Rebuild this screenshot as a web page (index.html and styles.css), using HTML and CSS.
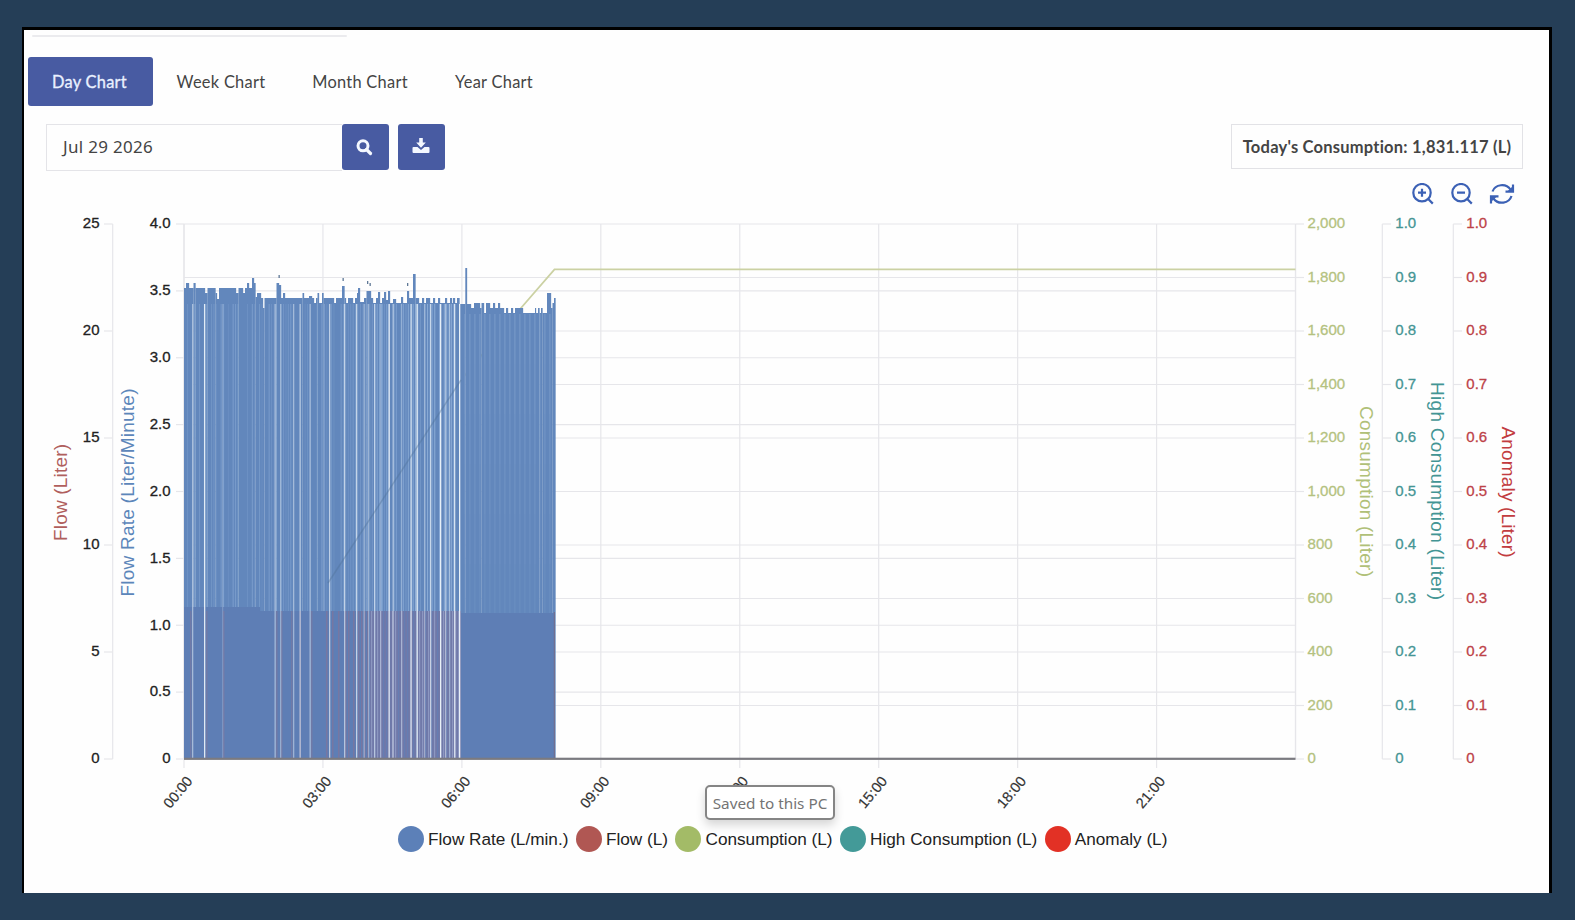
FILE: index.html
```
<!DOCTYPE html>
<html lang="en">
<head>
    <meta charset="UTF-8">
    <title>Water Consumption</title>
    <link rel="stylesheet" href="styles.css">
</head>
<body>
    <div class="container">
        <div class="divider"></div>

        <!-- Tabs -->
        <nav class="tabs">
            <a class="tab active">Day Chart</a>
            <a class="tab week">Week Chart</a>
            <a class="tab month">Month Chart</a>
            <a class="tab year">Year Chart</a>
        </nav>

        <!-- Date search and daily total -->
        <div class="toolbar">
            <div class="date">Jul 29 2026</div>
            <button class="btn search">
                <svg width="18" height="18" viewBox="0 0 18 18"><circle cx="8" cy="7.8" r="5" fill="none" stroke="#f4f8ff" stroke-width="3"/><path d="M11.5 11.5l4 4" stroke="#f4f8ff" stroke-width="3.2" stroke-linecap="round"/></svg>
            </button>
            <button class="btn download">
                <svg width="18" height="18" viewBox="0 0 18 18" fill="#f4f8ff"><path d="M7.2 1h3.6v4.5h3L9 10.8 4.2 5.5h3z"/><path d="M1.5 10h4l3.5 3 3.5-3h4q1 0 1 1v4q0 1-1 1h-15q-1 0-1-1v-4q0-1 1-1z"/></svg>
            </button>
            <div class="total"><span>Today's Consumption: 1,831.117 (L)</span></div>
        </div>

        <div class="tools">
            <svg width="22" height="22" viewBox="0 0 22 22"><circle cx="10" cy="9.7" r="8.7"/><path d="M16.2 16l4.6 4.6M6 9.7h8M10 5.7v8"/></svg>
            <svg width="22" height="22" viewBox="0 0 22 22"><circle cx="10" cy="9.7" r="8.7"/><path d="M16.2 16l4.6 4.6M6 9.7h8"/></svg>
            <svg class="refresh" width="26" height="22" viewBox="0 0 26 22"><path d="M3.5 8.5A10 9.2 0 0 1 21.5 6.5M24 1.5v7.2h-7.5M22.5 13A10 9.2 0 0 1 4.5 15.5M2 20.5v-7.2h7.5"/><path class="solid" d="M24 3v5.7h-6zM2 19v-5.7h6z"/></svg>
        </div>

        <!-- Chart -->
        <svg class="chart" id="chart" width="1525" height="610" viewBox="24 210 1525 610"></svg>

        <div class="legend">
            <div class="item"><i class="dot rate"></i>Flow Rate (L/min.)</div>
            <div class="item"><i class="dot flow"></i>Flow (L)</div>
            <div class="item"><i class="dot consumption"></i>Consumption (L)</div>
            <div class="item"><i class="dot high"></i>High Consumption (L)</div>
            <div class="item"><i class="dot anomaly"></i>Anomaly (L)</div>
        </div>

        <div class="toast">Saved to this PC</div>
    </div>

    <script src="chart.js"></script>
</body>
</html>
```

FILE: styles.css
```
* {
    box-sizing: border-box;
}

body {
    margin: 0;
    padding: 27px 23px 0 22px;
    height: 920px;
    overflow: hidden;
    background: #253e57;
    font-family: Lato, sans-serif;
    color: #444;
}

.container {
    position: relative;
    width: 1530px;
    height: 866px;
    background: #fefefe;
    border: solid #000;
    border-width: 3px 3px 0 2px;
}

.divider {
    width: 315px;
    height: 2px;
    margin: 5px 0 0 8px;
    border-radius: 2px;
    background: #ebebee;
}

/* Tabs */
.tabs {
    display: flex;
    margin: 20px 0 0 4px;
    height: 49px;
}

.tab {
    display: flex;
    align-items: center;
    justify-content: center;
    width: 125px;
    padding-bottom: 1px;
    font-size: 16.4px;
    letter-spacing: 0.28px;
    border-radius: 3px;
    white-space: nowrap;
}

.tab.active {
    background: #485ba2;
    color: #eaf1ff;
    padding-right: 2px;
    -webkit-text-stroke: 0.3px #eaf1ff;
}

.tab.week {
    width: 136px;
}

.tab.month {
    width: 142px;
}

.tab.year {
    width: 126px;
}

/* Toolbar */
.toolbar {
    display: flex;
    align-items: flex-start;
    margin: 18px 26px 0 22px;
    height: 47px;
}

.date {
    width: 296px;
    height: 47px;
    padding-left: 16px;
    border: 1px solid #e4e4e8;
    border-right: none;
    font-family: "Noto Sans", sans-serif;
    font-size: 17px;
    letter-spacing: 0.3px;
    line-height: 43px;
}

.btn {
    display: flex;
    align-items: center;
    justify-content: center;
    width: 47px;
    height: 46px;
    padding: 0 3px 0 0;
    border: none;
    border-radius: 3px;
    background: #485ba2;
}

.download {
    margin-left: 9px;
    padding: 0 1px 2px 0;
}

.total {
    margin-left: auto;
    width: 292px;
    height: 45px;
    border: 1px solid #e2e2e6;
    font-size: 16.5px;
    font-weight: bold;
    letter-spacing: 0.22px;
    line-height: 45px;
    text-align: center;
    white-space: nowrap;
}

.tools {
    display: flex;
    justify-content: flex-end;
    gap: 17px;
    height: 22px;
    margin: 12px 34px 0 0;
    fill: none;
    stroke: #3c61b5;
    stroke-width: 2.2;
}

.refresh {
    margin-left: -1px;
}

.tools .solid {
    fill: #3c61b5;
    stroke: none;
}

/* Chart */
.chart {
    display: block;
    margin-top: 5px;
    font-family: "Liberation Sans", Arial, sans-serif;
}

.grid {
    stroke: #e6e6ea;
    stroke-width: 1.2;
}

.tick {
    font-size: 15px;
    stroke-width: 0.3;
}

.time {
    font-size: 14.5px;
    fill: #333;
    stroke: #333;
    stroke-width: 0.2;
}

.name {
    font-size: 19px;
}

/* Legend */
.legend {
    display: flex;
    gap: 7.5px;
    margin: 6px 0 0 374px;
    font-family: "Liberation Sans", Arial, sans-serif;
    font-size: 17.2px;
    color: #222;
}

.item {
    display: flex;
    align-items: center;
    gap: 4px;
    white-space: nowrap;
}

.dot {
    width: 26px;
    height: 26px;
    border-radius: 50%;
}

.rate {
    background: #5c80b8;
}

.flow {
    background: #b05753;
}

.consumption {
    background: #a3bb67;
}

.high {
    background: #439a98;
}

.anomaly {
    background: #e23125;
}

/* Save message, sits over the time axis */
.toast {
    position: absolute;
    left: 681px;
    top: 755px;
    width: 130px;
    height: 35px;
    border: 2px solid #858585;
    border-radius: 5px;
    background: #fff;
    box-shadow: 0 5px 10px rgba(0, 0, 0, 0.16);
    color: #747474;
    font-family: "Noto Sans", sans-serif;
    font-size: 15.3px;
    line-height: 33px;
    text-align: center;
    white-space: nowrap;
}
```

FILE: chart.js
```
var LEFT = 184, RIGHT = 1295.5, TOP = 224, BOTTOM = 759;
var svg = document.getElementById('chart');

function add(tag, attrs, text) {
    var el = document.createElementNS('http://www.w3.org/2000/svg', tag);
    for (var key in attrs) {
        el.setAttribute(key, attrs[key]);
    }
    if (text !== undefined) {
        el.textContent = text;
    }
    svg.appendChild(el);
}

function line(x1, y1, x2, y2) {
    add('line', { x1: x1, y1: y1, x2: x2, y2: y2, 'class': 'grid' });
}

function rect(x, y, width, height, fill, opacity) {
    add('rect', { x: x, y: y, width: width, height: height, fill: fill, opacity: opacity || 1 });
}

// labels run from the top of the axis to zero
function axis(x, tickX, labelX, anchor, color, labels) {
    line(x, TOP, x, BOTTOM);
    labels.forEach(function(label, i) {
        var y = TOP + i * (BOTTOM - TOP) / (labels.length - 1);
        line(x, y, tickX, y);
        add('text', { x: labelX, y: y + 4.3, 'text-anchor': anchor, fill: color, stroke: color, 'class': 'tick' }, label);
    });
}

function axisName(x, y, angle, length, color, text) {
    add('text', {
        transform: 'translate(' + x + ' ' + y + ') rotate(' + angle + ')',
        textLength: length, fill: color, 'class': 'name'
    }, text);
}

// grid
for (var i = 0; i <= 8; i++) {
    line(LEFT, TOP + i * 66.875, RIGHT, TOP + i * 66.875);
    line(LEFT + i * 138.94, TOP, LEFT + i * 138.94, BOTTOM + (i < 8 ? 9 : 0));
}
for (i = 1; i < 10; i++) {
    line(LEFT, TOP + i * 53.5, RIGHT, TOP + i * 53.5);
}

var tenths = ['1.0', '0.9', '0.8', '0.7', '0.6', '0.5', '0.4', '0.3', '0.2', '0.1', '0'];
axis(112.7, 104, 99.5, 'end', '#222', ['25', '20', '15', '10', '5', '0']);
axis(LEFT, 176, 170.5, 'end', '#222', ['4.0', '3.5', '3.0', '2.5', '2.0', '1.5', '1.0', '0.5', '0']);
axis(RIGHT, 1304, 1307.6, 'start', '#b4c280', ['2,000', '1,800', '1,600', '1,400', '1,200', '1,000', '800', '600', '400', '200', '0']);
axis(1382.3, 1391, 1395.3, 'start', '#459594', tenths);
axis(1453.3, 1462, 1466.3, 'start', '#bd4248', tenths);

axisName(67, 541, -90, 97, '#b05f5d', 'Flow (Liter)');
axisName(134.3, 596.5, -90, 208, '#5c86ba', 'Flow Rate (Liter/Minute)');
axisName(1359.5, 406, 90, 171, '#b0c078', 'Consumption (Liter)');
axisName(1431, 382, 90, 218, '#439594', 'High Consumption (Liter)');
axisName(1502, 426.5, 90, 131, '#c23c40', 'Anomaly (Liter)');

['00:00', '03:00', '06:00', '09:00', '12:00', '15:00', '18:00', '21:00'].forEach(function(time, i) {
    var x = LEFT + i * 138.94 + 9.3;
    add('text', { transform: 'translate(' + x + ' 781.5) rotate(-50)', 'text-anchor': 'end', 'class': 'time' }, time);
});

// consumption
add('path', { d: 'M461 380L521 308L554.5 269.3H' + RIGHT, fill: 'none', stroke: '#cbd1a3', 'stroke-width': 1.8 });

// flow rate: [start of the run, top of the bars]
var runs = [
    [184, 288], [186, 283], [189, 288], [193.5, 283], [195.5, 288], [205, 293], [207.5, 288], [215.5, 293],
    [217, 299], [219, 288], [236, 293], [238.5, 288], [243, 293], [245, 288], [247, 283], [249, 288],
    [252, 278], [254, 283], [255.5, 297], [257, 293], [261, 298], [263, 308], [264.5, 298], [276.5, 283],
    [279, 285], [281, 298], [283, 293], [285, 298], [302.5, 293], [304, 298], [309, 296], [312, 298],
    [314, 303], [316, 298], [317.5, 293], [319, 303], [322, 293], [323.5, 298], [334, 303], [336, 298],
    [342, 286], [344.5, 298], [346, 303], [348, 298], [353, 303], [355, 298], [357, 293], [358, 288],
    [360, 302], [364, 298], [366.5, 291], [371, 298], [373, 303], [376, 298], [378, 292], [380, 303],
    [382, 298], [384, 292], [386, 300], [388, 291], [390, 303], [393, 299], [396, 303], [401, 297],
    [403, 303], [407, 291], [409, 298], [413, 274], [415.5, 298], [419, 303], [422, 298], [424, 303],
    [426, 298], [430, 303], [433, 298], [435, 303], [438, 298], [440, 303], [445, 298], [447, 303],
    [450, 298], [452, 303], [453, 298], [455, 303], [457, 298], [459.5, 304], [465.3, 268], [467, 304],
    [471, 308], [474, 303], [480, 308], [481.5, 303], [484, 313], [486, 303], [490, 308], [493, 303],
    [495, 308], [498, 303], [500, 308], [504, 313], [506, 308], [508, 313], [511, 308], [513, 313],
    [515, 308], [523, 313], [535, 308], [536, 313], [538, 308], [539.5, 313], [541, 308], [542.5, 313],
    [547, 293], [551, 308], [552.5, 303], [554, 298], [555.5, 298]
];
for (i = 0; i < runs.length - 1; i++) {
    rect(runs[i][0], runs[i][1], runs[i + 1][0] - runs[i][0] + 0.15, BOTTOM - runs[i][1], '#6287bc');
}
[[278.5, 275], [342.5, 278], [367, 281], [369.5, 283], [407, 283]].forEach(function(p) {
    rect(p[0], p[1], 1.3, 3, '#5f7896');
});

// fixed seed so that the bars look the same on every load
var seed = 17;
function random() {
    seed = (seed * 16807) % 2147483647;
    return seed / 2147483647;
}

// idle minutes between the bars, more of them after 03:00
for (var x = 187; x < 459; x += 2.4) {
    var share = x < 322 ? 0.55 : 0.75;
    if (random() < share) {
        rect(x, 304, 1.1, 308, '#a9c8ec', x < 370 ? 0.1 + random() * 0.25 : 0.2 + random() * 0.45);
    }
}
for (x = 464; x < 553; x += 5) {
    for (i = 0; i < 6; i++) {
        rect(x, 314 + i * 50, 1.7, 50, '#84a5d0', 0.42 - i * 0.05);
    }
}

// flow
rect(184, 607, 76, 152, '#5e7eb5');
rect(260, 611, 110, 148, '#5e7eb5');
rect(370, 611, 91, 148, '#7079a9');
rect(461, 613, 94, 146, '#5e7eb5');
[190, 206, 223, 276, 281, 291, 299.5, 311, 326, 332, 338, 345, 348, 353, 358, 361, 364, 367].forEach(function(x) {
    rect(x, 611, 1.5, 148, '#9b6f87', x < 320 ? 0.3 : 0.4);
});
for (x = 371; x < 459; x += 3) {
    rect(x, 611, 1.2, 148, random() < 0.5 ? '#9fabd2' : '#5e80ba', 0.6);
}

// longer pauses go down to zero
[[192, 0.5], [204, 0.9], [222, 0.2], [274.5, 0.5], [280, 0.4], [293, 0.45], [299.5, 0.6], [309.5, 0.5],
 [329, 0.65], [344, 0.6], [356, 0.7], [363.5, 0.4], [368, 0.4], [374, 0.6], [380, 0.3], [388.5, 0.9], [392.5, 0.5],
 [401, 0.3], [410.5, 0.75], [416.5, 0.95], [424, 0.4], [430, 0.7], [440, 0.95], [445, 0.5], [449, 0.4], [454, 0.8], [459, 0.95]].forEach(function(p) {
    rect(p[0], 304, 1.3, 454, '#eef5fb', p[1]);
});

add('path', { d: 'M328 583L461 380', stroke: '#4f7299', 'stroke-width': 1.5, opacity: 0.4 });
rect(553.8, 612, 1.2, 147, '#706f91');
rect(LEFT, 757.7, RIGHT - LEFT, 2.2, '#7b7a80');
```
